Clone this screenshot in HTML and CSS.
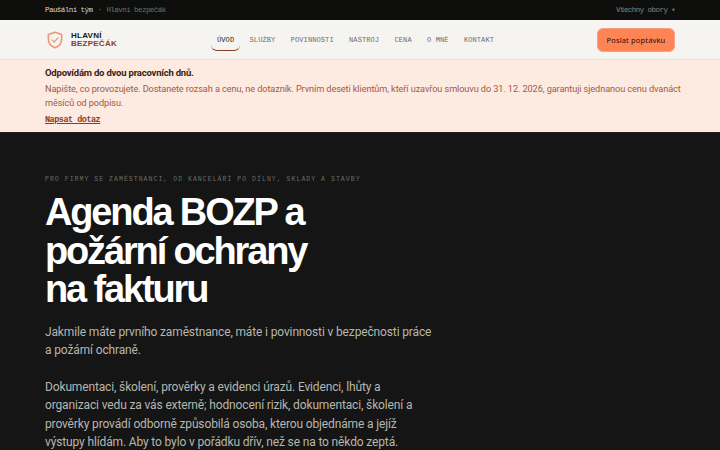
FILE: index.html

```html
<!DOCTYPE html>
<html lang="cs">
<head>
  <meta charset="UTF-8">
  <meta name="viewport" content="width=device-width, initial-scale=1.0">
  <title>Hlavní bezpečák</title>
  <link rel="stylesheet" href="styles.css">
</head>
<body>
  <div class="topbar">
    <div class="crumbs">
      <span class="crumb-main">Paušální tým</span>
      <span class="crumb-sep">·</span>
      <span class="crumb-sub">Hlavní bezpečák</span>
    </div>
    <div class="obory">Všechny obory <span class="caret">▾</span></div>
  </div>

  <header class="header">
    <a class="logo" href="#">
      <svg class="logo-icon" width="16" height="18" viewBox="0 0 16 18" fill="none">
        <path d="M8 1.2 L14.6 3.4 V8.6 C14.6 12.6 11.8 15.4 8 16.8 C4.2 15.4 1.4 12.6 1.4 8.6 V3.4 Z" stroke="#f0937a" stroke-width="1.6" stroke-linejoin="round"/>
        <path d="M5 8.8 L7.2 11 L11 6.8" stroke="#f0937a" stroke-width="1.2" stroke-linecap="round" stroke-linejoin="round"/>
      </svg>
      <span class="logo-text">
        <span class="logo-top">HLAVNÍ</span>
        <span class="logo-bottom">BEZPEČÁK</span>
      </span>
    </a>
    <nav class="nav">
      <a class="nav-link active" href="#">ÚVOD</a>
      <a class="nav-link" href="#">SLUŽBY</a>
      <a class="nav-link" href="#">POVINNOSTI</a>
      <a class="nav-link" href="#">NÁSTROJ</a>
      <a class="nav-link" href="#">CENA</a>
      <a class="nav-link" href="#">O MNĚ</a>
      <a class="nav-link" href="#">KONTAKT</a>
    </nav>
    <a class="cta" href="#">Poslat poptávku</a>
  </header>

  <div class="notice">
    <p class="notice-title">Odpovídám do dvou pracovních dnů.</p>
    <p class="notice-text">Napište, co provozujete. Dostanete rozsah a cenu, ne dotazník. Prvním deseti klientům, kteří uzavřou smlouvu do 31. 12. 2026, garantuji sjednanou cenu dvanáct<br>měsíců od podpisu.</p>
    <a class="notice-link" href="#">Napsat dotaz</a>
  </div>

  <main class="hero">
    <p class="eyebrow">PRO FIRMY SE ZAMĚSTNANCI, OD KANCELÁŘÍ PO DÍLNY, SKLADY A STAVBY</p>
    <h1>Agenda BOZP a<br>požární ochrany<br>na fakturu</h1>
    <p class="lead">Jakmile máte prvního zaměstnance, máte i povinnosti v bezpečnosti práce<br>a požární ochraně.</p>
    <p class="lead">Dokumentaci, školení, prověrky a evidenci úrazů. Evidenci, lhůty a<br>organizaci vedu za vás externě; hodnocení rizik, dokumentaci, školení a<br>prověrky provádí odborně způsobilá osoba, kterou objednáme a jejíž<br>výstupy hlídám. Aby to bylo v pořádku dřív, než se na to někdo zeptá.</p>
  </main>
</body>
</html>
```

FILE: styles.css

```css
* {
  box-sizing: border-box;
}
html, body {
  margin: 0;
  height: 450px;
  overflow: hidden;
}
body {
  font-family: Roboto, Arial, sans-serif;
  background-color: #141514;
}
a {
  text-decoration: none;
  color: inherit;
}
p {
  margin: 0;
}

/* Top bar */
.topbar {
  height: 20px;
  padding: 0 45px;
  background-color: #0e0f0c;
  display: flex;
  justify-content: space-between;
  align-items: center;
  font-family: "Liberation Mono", monospace;
  font-size: 7.5px;
  letter-spacing: -0.55px;
}
.crumbs {
  display: flex;
  gap: 5px;
}
.crumb-main {
  color: #d6d5cf;
}
.crumb-sep, .crumb-sub {
  color: #6f706a;
}
.obory {
  color: #85857f;
}
.caret {
  font-size: 7px;
}

/* Header */
.header {
  height: 40px;
  padding: 0 45px 0 47px;
  background-color: #f5f4f0;
  border-bottom: 1px solid #e3e1db;
  display: flex;
  align-items: center;
}
.logo {
  display: flex;
  align-items: center;
  gap: 8px;
  width: 170px;
}
.logo-text {
  display: flex;
  flex-direction: column;
  font-family: "Liberation Sans", Arial, sans-serif;
  font-size: 8px;
  font-weight: bold;
  line-height: 8px;
  letter-spacing: 0.03em;
}
.logo-top {
  color: #17170f;
}
.logo-bottom {
  color: #8a3d24;
}
.nav {
  display: flex;
  gap: 15.35px;
  font-family: "Liberation Mono", monospace;
  font-size: 7px;
  letter-spacing: 0.1px;
  color: #6d6c66;
}
.nav-link {
  padding: 0 6px 6px;
  margin: 7px -6px 0;
  border-bottom: 1px solid transparent;
  border-radius: 0 0 6px 6px;
}
.nav-link.active {
  color: #1d1c17;
  border-bottom-color: #8a3d24;
}
.cta {
  margin-left: auto;
  width: 78px;
  height: 24px;
  background-color: #ff8455;
  border: 1px solid #f4a283;
  border-radius: 6px;
  display: flex;
  align-items: center;
  justify-content: center;
  font-family: "Noto Sans", Arial, sans-serif;
  font-size: 7.5px;
  letter-spacing: 0.02em;
  color: #2a0f05;
}

/* Notice */
.notice {
  height: 73px;
  padding: 6px 45px 0;
  background-color: #fdeae1;
  border-bottom: 1px solid #23211e;
  font-size: 9.2px;
  line-height: 13.5px;
}
.notice-title {
  font-size: 9.5px;
  font-weight: 700;
  letter-spacing: -0.2px;
  color: #3c1c10;
  margin-bottom: 2.5px;
}
.notice-text {
  color: #a15b47;
  margin-bottom: 2.5px;
  letter-spacing: -0.1px;
  white-space: nowrap;
}
.notice-link {
  font-family: "Liberation Mono", monospace;
  font-size: 8.5px;
  letter-spacing: -0.5px;
  font-weight: bold;
  color: #8a3d24;
  text-decoration: underline;
}

/* Hero */
.hero {
  padding: 43px 45px 0;
}
.eyebrow {
  font-family: "Liberation Mono", monospace;
  font-size: 6.5px;
  letter-spacing: 1.03px;
  color: #6c6d67;
}
h1 {
  margin: 10px 0 14.5px;
  font-family: "Liberation Sans", Arial, sans-serif;
  font-size: 38px;
  font-weight: 700;
  line-height: 38.5px;
  letter-spacing: -2.15px;
  color: #ffffff;
}
.lead {
  font-size: 12px;
  line-height: 18.3px;
  letter-spacing: -0.14px;
  color: #b7b7b0;
  margin-bottom: 18.5px;
  white-space: nowrap;
}
```
